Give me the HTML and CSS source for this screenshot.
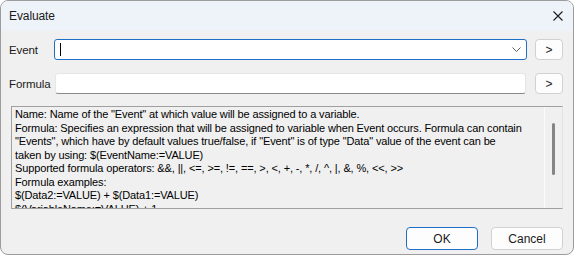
FILE: index.html
```html
<!DOCTYPE html>
<html lang="en">
<head>
  <meta charset="UTF-8" />
  <title>Evaluate</title>
  <link rel="stylesheet" href="styles.css">
</head>
<body>
  <div class="window">
    <!-- Title bar -->
    <div class="titlebar">
      <span class="title">Evaluate</span>
      <svg class="close" width="10" height="10" viewBox="0 0 10 10">
        <path d="M0.5 0.5 L9.5 9.5 M9.5 0.5 L0.5 9.5" stroke="#1b1b1b" stroke-width="1.1" fill="none"/>
      </svg>
    </div>

    <div class="content">
      <!-- Event row -->
      <div class="row">
        <label class="label">Event</label>
        <div class="combo">
          <span class="caret"></span>
          <svg class="chevron" width="9" height="5" viewBox="0 0 9 5">
            <path d="M0.5 0.5 L4.5 4.5 L8.5 0.5" stroke="#606060" stroke-width="1" fill="none"/>
          </svg>
        </div>
        <button class="btn-small">&gt;</button>
      </div>

      <!-- Formula row -->
      <div class="row row-formula">
        <label class="label">Formula</label>
        <div class="textbox"></div>
        <button class="btn-small">&gt;</button>
      </div>

      <!-- Help text -->
      <div class="helpbox">
        <div class="helptext">
          <div>Name: Name of the "Event" at which value will be assigned to a variable.</div>
          <div>Formula: Specifies an expression that will be assigned to variable when Event occurs. Formula can contain</div>
          <div>"Events", which have by default values true/false, if "Event" is of type "Data" value of the event can be</div>
          <div>taken by using: $(EventName:=VALUE)</div>
          <div>Supported formula operators: &amp;&amp;, ||, &lt;=, &gt;=, !=, ==, &gt;, &lt;, +, -, *, /, ^, |, &amp;, %, &lt;&lt;, &gt;&gt;</div>
          <div>Formula examples:</div>
          <div>$(Data2:=VALUE) + $(Data1:=VALUE)</div>
          <div>$(VariableName:=VALUE) + 1</div>
        </div>
        <div class="scrollbar">
          <div class="thumb"></div>
        </div>
      </div>

      <!-- Dialog buttons -->
      <div class="actions">
        <button class="btn btn-default">OK</button>
        <button class="btn">Cancel</button>
      </div>
    </div>
  </div>
</body>
</html>
```

FILE: styles.css
```css
* {
  margin: 0;
  padding: 0;
  box-sizing: border-box;
}
body {
  background-color: #ffffff;
  font-family: "Liberation Sans", Arial, sans-serif;
  color: #1a1a1a;
}
.window {
  width: 574px;
  height: 255px;
  border: 1px solid #9c9c9c;
  border-radius: 8px;
  background-color: #f0f0f0;
  overflow: hidden;
  display: flex;
  flex-direction: column;
}
/* Title bar */
.titlebar {
  height: 30px;
  flex: none;
  background-color: #eef3fa;
  display: flex;
  align-items: center;
  justify-content: space-between;
  padding: 0 10px 0 8px;
}
.title {
  font-size: 12px;
  letter-spacing: -0.1px;
  color: #1a1a1a;
}
.close {
  display: block;
}
/* Form */
.content {
  padding: 0 10px 0 8px;
  display: flex;
  flex-direction: column;
}
.row {
  display: flex;
  align-items: center;
  height: 21px;
  margin-top: 8px;
}
.row-formula {
  margin-top: 13px;
}
.label {
  width: 45px;
  flex: none;
  font-size: 11.5px;
  letter-spacing: -0.1px;
  color: #1a1a1a;
}
.combo {
  flex: 1;
  height: 21px;
  background-color: #ffffff;
  border: 1px solid #1f6fc8;
  border-radius: 3px;
  display: flex;
  align-items: center;
  justify-content: space-between;
  padding: 0 5px 0 5px;
  margin-right: 8px;
}
.caret {
  width: 1px;
  height: 13px;
  background-color: #000000;
}
.chevron {
  display: block;
}
.textbox {
  flex: 1;
  height: 21px;
  background-color: #ffffff;
  border: 1px solid #e6e6e6;
  border-bottom-color: #8a8a8a;
  border-radius: 3px;
  margin: 0 9px 0 1px;
}
.btn-small {
  width: 28px;
  height: 21px;
  flex: none;
  background-color: #fdfdfd;
  border: 1px solid #d1d1d1;
  border-radius: 4px;
  font-family: "Liberation Sans", Arial, sans-serif;
  font-size: 12px;
  color: #1a1a1a;
}
/* Help text box */
.helpbox {
  margin: 12px 0 0 2px;
  height: 103px;
  border: 1px solid;
  border-color: #a0a0a0 #e3e3e3 #a0a0a0 #a0a0a0;
  display: flex;
  background-color: #f0f0f0;
}
.helptext {
  flex: 1;
  overflow: hidden;
  padding: 1px 0 0 3px;
  font-size: 11px;
  line-height: 13.5px;
  letter-spacing: -0.13px;
  color: #000000;
  white-space: nowrap;
}
.scrollbar {
  width: 18px;
  flex: none;
  border-left: 1px solid #fbfbfb;
  display: flex;
  justify-content: center;
}
.thumb {
  width: 3px;
  height: 52px;
  margin-top: 16px;
  background-color: #858585;
  border-radius: 2px;
}
/* Dialog buttons */
.actions {
  display: flex;
  justify-content: flex-end;
  gap: 13px;
  margin-top: 18px;
}
.btn {
  width: 72px;
  height: 23px;
  background-color: #fdfdfd;
  border: 1px solid #d1d1d1;
  border-radius: 4px;
  font-family: "Liberation Sans", Arial, sans-serif;
  font-size: 12px;
  color: #1a1a1a;
}
.btn-default {
  border-color: #1f6fc8;
}
```
